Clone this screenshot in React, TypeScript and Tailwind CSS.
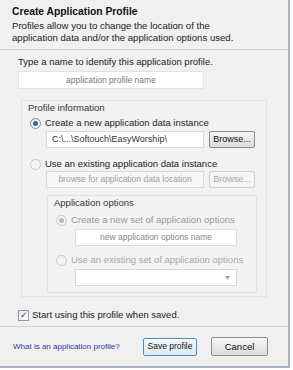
import React from 'react';

const font = { fontFamily: '"Liberation Sans", Arial, sans-serif' };

const Radio = ({ checked, disabled }: { checked?: boolean; disabled?: boolean }) => (
  <span
    className={
      'inline-flex items-center justify-center w-[11px] h-[11px] rounded-full border shrink-0 ' +
      (disabled ? 'border-[#c8c8c8] bg-[#f4f4f4]' : 'border-[#8e8f8f] bg-gradient-to-br from-[#e8e8e8] to-[#ffffff]')
    }
  >
    {checked && (
      <span className={'w-[5px] h-[5px] rounded-full ' + (disabled ? 'bg-[#b8b8b8]' : 'bg-[#2a6a9a]')} />
    )}
  </span>
);

const Field = ({ children, disabled, center, className }: { children?: React.ReactNode; disabled?: boolean; center?: boolean; className?: string }) => (
  <div
    className={
      'h-[17px] border flex items-center px-[5px] text-[8.5px] leading-none whitespace-nowrap ' +
      (disabled ? 'border-[#d9d9d9] bg-[#f7f7f7] text-[#a0a0a0] ' : 'border-[#d5dbe2] bg-white text-[#333] ') +
      (center ? 'justify-center ' : '') +
      (className || '')
    }
  >
    {children}
  </div>
);

const Btn = ({ children, disabled, focus, className }: { children: React.ReactNode; disabled?: boolean; focus?: boolean; className?: string }) => (
  <div
    className={
      'flex items-center justify-center rounded-[2px] border leading-none whitespace-nowrap ' +
      (disabled
        ? 'border-[#d0d0d0] bg-[#f4f4f4] text-[#a8a8a8] '
        : focus
        ? 'border-[#4a90c0] bg-gradient-to-b from-[#f4f9fc] to-[#dfe9f1] text-[#111] '
        : 'border-[#8c8c8c] bg-gradient-to-b from-[#f6f6f6] to-[#dcdcdc] text-[#111] ') +
      (className || '')
    }
  >
    {children}
  </div>
);

export default function App() {
  return (
    <div style={font} className="w-[293px] h-[370px] bg-white">
      <div className="w-[290px] h-[368px] bg-[#f0f0f0] border-r-2 border-b-2 border-[#a6b4c4] flex flex-col text-[#222]">
        {/* header */}
        <div className="px-[12px] pt-[5px] pb-[5px] border-b border-[#cfcfcf] shrink-0">
          <div className="font-bold text-[10.3px] leading-[14px] text-[#111]">Create Application Profile</div>
          <div className="text-[9.6px] leading-[12px] mt-[1px]">
            Profiles allow you to change the location of the
            <br />
            application data and/or the application options used.
          </div>
        </div>

        {/* body */}
        <div className="flex-1 px-[18px] pt-[6px] text-[9.5px] leading-[12px]">
          <div>Type a name to identify this application profile.</div>
          <Field center className="w-[186px] h-[18px] mt-[3px] border-[#dde3ea]">
            <span className="text-[#777]">application profile name</span>
          </Field>

          <div className="mt-[11px] ml-[3px] w-[246px] border border-[#e2e2e2] bg-[#f2f2f2] pl-[6px] pr-[10px] pt-[1px] pb-[3px]">
            <div className="text-[#333]">Profile information</div>

            <div className="flex items-center gap-[4px] mt-[3px] ml-[2px]">
              <Radio checked />
              <span>Create a new application data instance</span>
            </div>
            <div className="flex items-center gap-[5px] mt-[2px] ml-[18px]">
              <Field className="w-[158px] text-[9px]">C:\...\Softouch\EasyWorship\</Field>
              <Btn className="w-[46px] h-[17px] text-[9px]">Browse...</Btn>
            </div>

            <div className="flex items-center gap-[4px] mt-[10px] ml-[2px]">
              <Radio disabled />
              <span>Use an existing application data instance</span>
            </div>
            <div className="flex items-center gap-[5px] mt-[1px] ml-[18px]">
              <Field disabled center className="w-[158px]">browse for application data location</Field>
              <Btn disabled className="w-[46px] h-[17px] text-[9px]">Browse...</Btn>
            </div>

            <div className="mt-[7px] ml-[19px] w-[210px] border border-[#e2e2e2] bg-[#f3f3f3] pl-[6px] pr-[8px] pt-[1px] pb-[6px]">
              <div className="text-[#333]">Application options</div>
              <div className="flex items-center gap-[4px] mt-[5px] ml-[2px] text-[#9a9a9a]">
                <Radio checked disabled />
                <span>Create a new set of application options</span>
              </div>
              <Field center className="w-[162px] h-[17px] mt-[3px] ml-[21px] border-[#dcdcdc] bg-white text-[#888]">
                new application options name
              </Field>
              <div className="flex items-center gap-[4px] mt-[8px] ml-[2px] text-[#a8a8a8]">
                <Radio disabled />
                <span>Use an existing set of application options</span>
              </div>
              <Field className="w-[162px] h-[17px] mt-[3px] ml-[21px] border-[#d8d8d8] bg-[#f8f8f8] justify-end">
                <span className="text-[7px] text-[#999]">▼</span>
              </Field>
            </div>
          </div>

          <div className="flex items-center gap-[3px] mt-[12px]">
            <span className="w-[11px] h-[11px] border border-[#8e9aa8] bg-gradient-to-br from-[#e6e9ee] to-white flex items-center justify-center text-[9px] leading-none text-[#2a3d72]">
              ✓
            </span>
            <span>Start using this profile when saved.</span>
          </div>
        </div>

        {/* footer */}
        <div className="h-[40px] border-t border-[#d4d4d4] flex items-center px-[13px] shrink-0">
          <span className="text-[8px] text-[#2e3a9e] flex-1 whitespace-nowrap">What is an application profile?</span>
          <Btn focus className="w-[54px] h-[18px] text-[8.5px] mr-[14px]">Save profile</Btn>
          <Btn className="w-[57px] h-[19px] text-[9.5px] mr-[7px]">Cancel</Btn>
        </div>
      </div>
    </div>
  );
}
